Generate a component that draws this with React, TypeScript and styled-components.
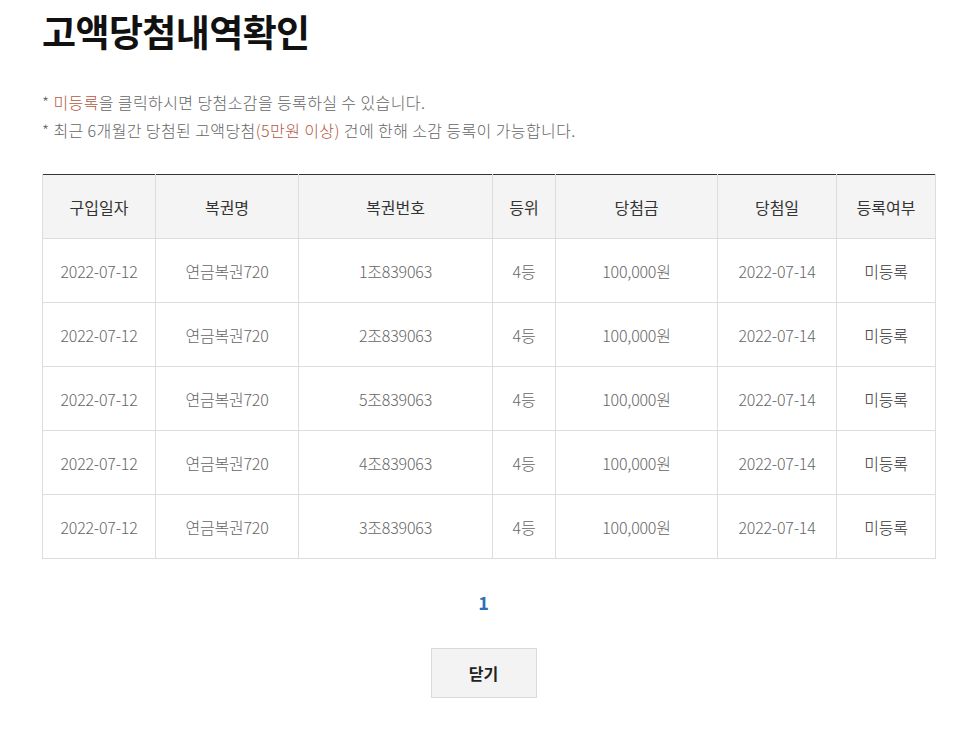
import React from "react";
import styled, { createGlobalStyle } from "styled-components";

const Global = createGlobalStyle`
  html, body { margin: 0; padding: 0; background: #fff; }
  body { font-family: "Noto Sans CJK KR", "Noto Sans", sans-serif; }
`;

const Page = styled.div`
  padding: 3px 40px 0 42px;
  width: 893px;
`;

const Title = styled.h1`
  margin: 0;
  font-size: 37px;
  font-weight: 700;
  color: #111;
  line-height: 56px;
  letter-spacing: -0.6px;
`;

const Notes = styled.ul`
  list-style: none;
  margin: 29px 0 0;
  padding: 0;
`;

const Note = styled.li`
  font-size: 16px;
  line-height: 28px;
  color: #666;
  font-weight: 300;
  letter-spacing: 0.4px;
`;

const Red = styled.span`
  color: #b4573f;
`;

const Table = styled.table`
  margin-top: 30px;
  width: 893px;
  border-collapse: collapse;
  border-top: 1px solid #333;
  table-layout: fixed;
`;

const Th = styled.th<{ $w: number }>`
  width: ${(p) => p.$w}px;
  height: 63px;
  background: #f4f4f4;
  border: 1px solid #ddd;
  border-top: none;
  font-size: 16px;
  font-weight: 400;
  color: #333;
  text-align: center;
  padding: 0;
`;

const Td = styled.td<{ $strong?: boolean }>`
  height: 63px;
  border: 1px solid #ddd;
  font-size: 16px;
  font-weight: 300;
  color: ${(p) => (p.$strong ? "#333" : "#666")};
  text-align: center;
  padding: 0;
  letter-spacing: -0.2px;
`;

const Pager = styled.div`
  margin-top: 31px;
  padding-right: 10px;
  display: flex;
  justify-content: center;
`;

const PageNum = styled.a`
  font-size: 18px;
  font-weight: 700;
  color: #2f6fb5;
  line-height: 24px;
`;

const Actions = styled.div`
  margin-top: 34px;
  padding-right: 10px;
  display: flex;
  justify-content: center;
`;

const Button = styled.button`
  width: 106px;
  height: 50px;
  background: #f3f3f3;
  border: 1px solid #d9d9d9;
  font-family: inherit;
  font-size: 16px;
  font-weight: 700;
  color: #222;
  cursor: pointer;
`;

const cols = [
  { label: "구입일자", w: 112 },
  { label: "복권명", w: 142 },
  { label: "복권번호", w: 193 },
  { label: "등위", w: 62 },
  { label: "당첨금", w: 161 },
  { label: "당첨일", w: 118 },
  { label: "등록여부", w: 98 },
];

const rows = ["1조839063", "2조839063", "5조839063", "4조839063", "3조839063"];

export default function App() {
  return (
    <>
      <Global />
      <Page>
        <Title>고액당첨내역확인</Title>
        <Notes>
          <Note>
            * <Red>미등록</Red>을 클릭하시면 당첨소감을 등록하실 수 있습니다.
          </Note>
          <Note>
            * 최근 6개월간 당첨된 고액당첨<Red>(5만원 이상)</Red> 건에 한해 소감 등록이 가능합니다.
          </Note>
        </Notes>
        <Table>
          <thead>
            <tr>
              {cols.map((c) => (
                <Th key={c.label} $w={c.w}>
                  {c.label}
                </Th>
              ))}
            </tr>
          </thead>
          <tbody>
            {rows.map((n) => (
              <tr key={n}>
                <Td>2022-07-12</Td>
                <Td>연금복권720</Td>
                <Td>{n}</Td>
                <Td>4등</Td>
                <Td>100,000원</Td>
                <Td>2022-07-14</Td>
                <Td $strong>미등록</Td>
              </tr>
            ))}
          </tbody>
        </Table>
        <Pager>
          <PageNum>1</PageNum>
        </Pager>
        <Actions>
          <Button>닫기</Button>
        </Actions>
      </Page>
    </>
  );
}
